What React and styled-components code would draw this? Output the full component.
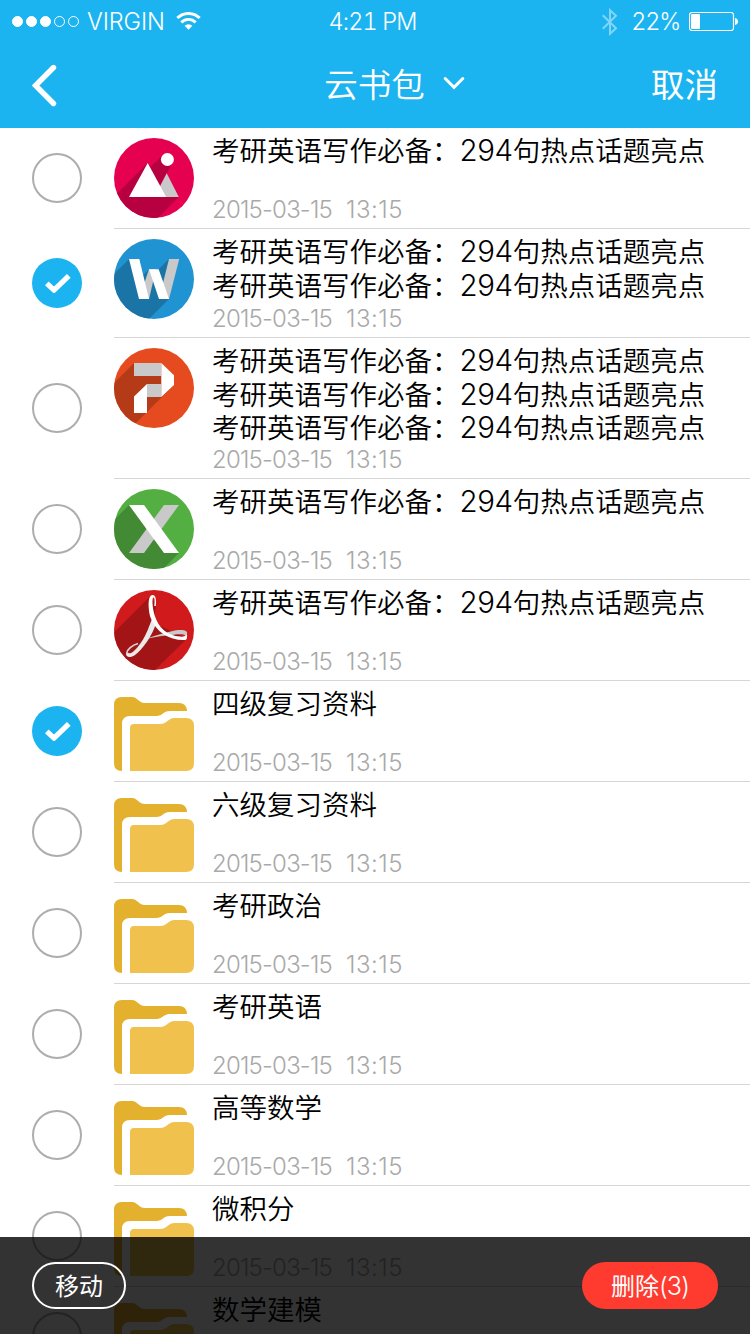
import React from "react";
import styled, { createGlobalStyle } from "styled-components";

const cjk = `"Noto Sans CJK SC", sans-serif`;

const GlobalStyle = createGlobalStyle`
  * { box-sizing: border-box; }
  body { margin: 0; background: #fff; }
  button { font: inherit; color: inherit; background: none; border: 0; padding: 0; }
`;

const Screen = styled.main`
  position: relative;
  display: flex;
  flex-direction: column;
  width: 750px;
  height: 1334px;
  overflow: hidden;
  background: #fff;
  font-family: ${cjk};
`;

const Header = styled.header`
  flex: none;
  height: 128px;
  color: #fff;
  background: #1bb4f1;
`;

const StatusBar = styled.div`
  display: grid;
  grid-template-columns: 1fr auto 1fr;
  align-items: center;
  height: 43px;
  padding: 0 12px;
  font: 300 23.5px/43px Inter, "Liberation Sans", sans-serif;
`;

const StatusGroup = styled.div`
  display: flex;
  align-items: center;
  justify-content: ${(p) => (p.$end ? "flex-end" : "flex-start")};
`;

const StatusText = styled.span`
  letter-spacing: ${(p) => p.$tracking || 0}px;
  font-variant-numeric: tabular-nums;
  white-space: nowrap;
`;

const Clock = styled(StatusText)`
  padding-right: 5px;
`;

const Signal = styled.div`
  display: flex;
  gap: 3px;
  margin-right: 8px;
`;

const Dot = styled.i`
  width: 11px;
  height: 11px;
  border: 1px solid #fff;
  border-radius: 50%;
  background: ${(p) => (p.$on ? "#fff" : "transparent")};
`;

const NavBar = styled.nav`
  display: grid;
  grid-template-columns: 1fr auto 1fr;
  align-items: center;
  height: 85px;
  padding: 0 32px;
  font-size: 33.5px;
  line-height: 48px;
`;

const BackButton = styled.button`
  && {
    display: flex;
    justify-self: start;
  }
`;

const NavTitle = styled.button`
  && {
    display: flex;
    align-items: center;
    gap: 18px;
    padding: 0 0 6px 39px;
    font-weight: 350;
  }
`;

const NavAction = styled.button`
  && {
    justify-self: end;
    padding-bottom: 6px;
  }
`;

const List = styled.ul`
  flex: none;
  margin: 0;
  padding: 0;
  list-style: none;
`;

const rowHeights = { 1: 101, 2: 109, 3: 141 };

const Row = styled.li`
  display: flex;
  height: ${(p) => rowHeights[p.$lines]}px;
`;

const CheckCell = styled.div`
  display: flex;
  align-items: center;
  flex: none;
  width: 114px;
  padding: 0 0 1px 32px;
`;

const CheckCircle = styled.span`
  display: flex;
  width: 50px;
  height: 50px;
  border: ${(p) => (p.$on ? "0" : "2px solid #adadad")};
  border-radius: 50%;
  background: ${(p) => (p.$on ? "#1bb4f1" : "transparent")};
`;

const RowBody = styled.div`
  display: flex;
  flex: 1;
  gap: 18px;
  border-bottom: 1px solid #d6d6d6;
`;

const IconBox = styled.div`
  flex: none;
  width: 80px;
  height: 80px;
  margin-top: 10px;
`;

const RowText = styled.div`
  display: flex;
  flex-direction: column;
  justify-content: space-between;
  padding: 5px 0 2px;
`;

const Title = styled.div`
  color: #000;
  font-size: 27.5px;
  font-weight: 350;
  line-height: 33.6px;
  white-space: nowrap;
`;

const TitleLine = styled.div`
  height: 33.6px;
`;

const Digits = styled.span`
  font: 350 29.5px/30px Inter, "Liberation Sans", sans-serif;
  letter-spacing: -0.4px;
`;

const Timestamp = styled.time`
  display: flex;
  gap: 14px;
  color: #a9a9a9;
  font: 300 24px/32px Inter, "Liberation Sans", sans-serif;
`;

const DatePart = styled.span`
  letter-spacing: -0.8px;
`;

const TimePart = styled.span`
  letter-spacing: 0.5px;
`;

const ActionBar = styled.footer`
  position: absolute;
  left: 0;
  right: 0;
  bottom: 0;
  display: flex;
  align-items: flex-start;
  justify-content: space-between;
  height: 97px;
  padding: 25px 32px 0;
  color: #fff;
  background: rgba(0, 0, 0, 0.8);
`;

const PillButton = styled.button`
  && {
    width: ${(p) => (p.$danger ? 136 : 94)}px;
    height: 47px;
    padding-bottom: 2px;
    border: ${(p) => (p.$danger ? "0" : "2px solid #fff")};
    border-radius: 24px;
    background: ${(p) => (p.$danger ? "#ff3b30" : "transparent")};
    font-size: 24px;
    line-height: ${(p) => (p.$danger ? 45 : 41)}px;
    white-space: nowrap;
  }
`;

const Count = styled.span`
  font: 300 25px/30px Inter, "Liberation Sans", sans-serif;
  letter-spacing: -0.8px;
`;

const Svg = styled.svg`
  display: block;
  flex: none;
  margin-left: ${(p) => p.$left || 0}px;
  margin-right: ${(p) => p.$right || 0}px;
`;

const WifiIcon = () => (
  <Svg $left={11} width="25" height="19" viewBox="0 0 25 19" fill="none" stroke="#fff" strokeWidth="2.9">
    <path d="M1.3 6.1a15.8 15.8 0 0 1 22.4 0" />
    <path d="M5.3 10.4a10.2 10.2 0 0 1 14.4 0" />
    <path d="M12.5 17.8l-3.9-4a5.6 5.6 0 0 1 7.8 0z" fill="#fff" stroke="none" />
  </Svg>
);

const BluetoothIcon = () => (
  <Svg $right={13} width="16" height="28" viewBox="0 0 16 28" fill="none" stroke="#fff" strokeWidth="2" opacity=".45">
    <path d="M.8 7.3 14 20.2 8 25.8V2.2L14 7.8.8 20.7" />
  </Svg>
);

const BatteryIcon = () => (
  <Svg $left={9} width="49" height="19" viewBox="0 0 49 19">
    <rect x=".5" y=".5" width="44" height="18" rx="2.5" fill="none" stroke="#fff" strokeWidth="1.2" />
    <rect x="2" y="2" width="9" height="15" rx="1" fill="#fff" />
    <path d="M46 6q3 .8 3 3.5T46 13z" fill="#fff" />
  </Svg>
);

const Badge = ({ id, bg, shade, shadow, children }) => (
  <Svg width="80" height="80" viewBox="0 0 80 80">
    <clipPath id={id}>
      <circle cx="40" cy="40" r="40" />
    </clipPath>
    <g clipPath={`url(#${id})`}>
      <rect width="80" height="80" fill={bg} />
      <path d={shadow} fill={shade} />
    </g>
    {children}
  </Svg>
);

const PictureIcon = ({ id }) => (
  <Badge id={id} bg="#e60050" shade="#b70040" shadow="M33.7 25 0 58.7V80H44L64.7 59 46 47 58 26 48.7 17 37 28.5Z">
    <path d="M52.7 35.3 64.8 59H40.5Z" fill="#c9c9c9" />
    <path d="M33.7 25 52.2 59H15Z" fill="#fff" />
    <circle cx="53.4" cy="21.5" r="6.5" fill="#fff" />
  </Badge>
);

const WordIcon = ({ id }) => (
  <Badge id={id} bg="#2094d2" shade="#1a75a6" shadow="M15 20 0 35V80H35L55 60V20L44.7 30.3H35L28 37.5Z">
    <path d="M35 30.3H42L35 60H25Z" fill="#c9c9c9" />
    <path d="M55 20H65.2L55 60H45Z" fill="#c9c9c9" />
    <path d="M15 20H25.3L35 60H25Z" fill="#fff" />
    <path d="M35 30.3H44.7L55 60H45Z" fill="#fff" />
  </Badge>
);

const SlidesIcon = ({ id }) => (
  <Badge id={id} bg="#e64b1f" shade="#b43a18" shadow="M20 15-1 36V80H17L60 37 47.3 15Z">
    <path d="M20 15H47.3V28H20ZM33 36H47.3V49H33Z" fill="#c9c9c9" />
    <path d="M47.3 15 60 27.2V37L47.3 49ZM33 36V65H20V48.5Z" fill="#fff" />
  </Badge>
);

const SheetIcon = ({ id }) => (
  <Badge id={id} bg="#53af41" shade="#428b34" shadow="M15 16-1 32V80H49L65 64 40 40Z">
    <path d="M50 16H65L30 64H15Z" fill="#c9c9c9" />
    <path d="M15 16H30L65 64H50Z" fill="#fff" />
  </Badge>
);

const PdfIcon = ({ id }) => (
  <Badge id={id} bg="#d11a1c" shade="#a31416" shadow="M35.5 7-1 43.5V80H41L73 48.5 40 33 42 14Z">
    <path d="M32 49C42 45 52 42.5 62 40.3 69 39.3 74 40.5 73 43.5L72 46.5C71 44 67 44 60 44.7 50 45.5 42 46.5 32 49Z" fill="#c9c9c9" />
    <path d="M24 53.5C18 55 13 60 12.8 63 12.7 65.5 15 66 17 65" fill="none" stroke="#d6d6d6" strokeWidth="1.7" />
    <path d="M38 29 42 33C38.5 46 28 60 21 65 16.5 68 12.5 67.5 12.2 64.5L14 62.5C17 67 29 53 34.5 38Z" fill="#e9e9e9" />
    <path d="M41.8 16C42.6 9 41.5 5 38.7 5 33.5 5 34 18 36.3 27 42 43 57 51 71.5 50 73.2 49.5 73.2 47 73 43.5 72 46 70 46.8 66 46.6 53 45.5 44.5 38 40.5 25 38.3 17 37.8 7.5 39.5 7.5 41 7.8 40.7 12 40.3 16Z" fill="#fff" />
  </Badge>
);

const FolderIcon = () => (
  <Svg width="80" height="80" viewBox="0 0 80 80">
    <g transform="translate(0 6)">
      <path d="M0 8Q0 0 8 0H18C24 0 24 6 31 6H65Q72.5 6 73 14H56C49 14 49 19 42 19H16Q8 19 8 27V74Q0 74 0 66Z" fill="#e3b12d" />
      <path d="M16 31Q16 27 20 27H46C54 27 53 21 61 21H72Q80 21 80 29V66Q80 74 72 74H16Z" fill="#f0c24d" />
    </g>
  </Svg>
);

const icons = {
  picture: PictureIcon,
  word: WordIcon,
  slides: SlidesIcon,
  sheet: SheetIcon,
  pdf: PdfIcon,
  folder: FolderIcon,
};

const article = { text: "考研英语写作必备：", digits: "294", rest: "句热点话题亮点" };

const items = [
  { icon: "picture", lines: [article] },
  { icon: "word", lines: [article, article], checked: true },
  { icon: "slides", lines: [article, article, article] },
  { icon: "sheet", lines: [article] },
  { icon: "pdf", lines: [article] },
  { icon: "folder", lines: [{ text: "四级复习资料" }], checked: true },
  { icon: "folder", lines: [{ text: "六级复习资料" }] },
  { icon: "folder", lines: [{ text: "考研政治" }] },
  { icon: "folder", lines: [{ text: "考研英语" }] },
  { icon: "folder", lines: [{ text: "高等数学" }] },
  { icon: "folder", lines: [{ text: "微积分" }] },
  { icon: "folder", lines: [{ text: "数学建模" }] },
];

const Check = ({ on }) => (
  <CheckCircle $on={on}>
    {on && (
      <Svg width="50" height="50" viewBox="0 0 50 50" fill="none" stroke="#fff" strokeWidth="5.2" strokeLinejoin="round">
        <path d="M14.8 25.3 22 32.2 36.8 17.8" />
      </Svg>
    )}
  </CheckCircle>
);

const FileRow = ({ item, index }) => {
  const Icon = icons[item.icon];
  return (
    <Row $lines={item.lines.length}>
      <CheckCell>
        <Check on={item.checked} />
      </CheckCell>
      <RowBody>
        <IconBox>
          <Icon id={`badge-${index}`} />
        </IconBox>
        <RowText>
          <Title>
            {item.lines.map((line, i) => (
              <TitleLine key={i}>
                {line.text}
                {line.digits && <Digits>{line.digits}</Digits>}
                {line.rest}
              </TitleLine>
            ))}
          </Title>
          <Timestamp>
            <DatePart>2015-03-15</DatePart>
            <TimePart>13:15</TimePart>
          </Timestamp>
        </RowText>
      </RowBody>
    </Row>
  );
};

export default function App() {
  return (
    <Screen>
      <GlobalStyle />
      <Header>
        <StatusBar>
          <StatusGroup>
            <Signal>
              {[1, 1, 1, 0, 0].map((on, i) => (
                <Dot key={i} $on={on} />
              ))}
            </Signal>
            <StatusText $tracking={-0.1}>VIRGIN</StatusText>
            <WifiIcon />
          </StatusGroup>
          <Clock $tracking={-0.9}>4:21 PM</Clock>
          <StatusGroup $end>
            <BluetoothIcon />
            <StatusText $tracking={-1.2}>22%</StatusText>
            <BatteryIcon />
          </StatusGroup>
        </StatusBar>
        <NavBar>
          <BackButton aria-label="返回">
            <Svg width="26" height="44" viewBox="0 0 26 44" fill="none" stroke="#fff" strokeWidth="5.4" strokeLinecap="round">
              <path d="M21.5 3.5 3.5 21.5 21.5 39.5" />
            </Svg>
          </BackButton>
          <NavTitle>
            云书包
            <Svg width="22" height="14" viewBox="0 0 22 14" fill="none" stroke="#fff" strokeWidth="3" strokeLinecap="round">
              <path d="M2.2 2.5 11 11.3 19.8 2.5" />
            </Svg>
          </NavTitle>
          <NavAction>取消</NavAction>
        </NavBar>
      </Header>
      <List>
        {items.map((item, i) => (
          <FileRow key={i} item={item} index={i} />
        ))}
      </List>
      <ActionBar>
        <PillButton>移动</PillButton>
        <PillButton $danger>
          删除<Count>(3)</Count>
        </PillButton>
      </ActionBar>
    </Screen>
  );
}
